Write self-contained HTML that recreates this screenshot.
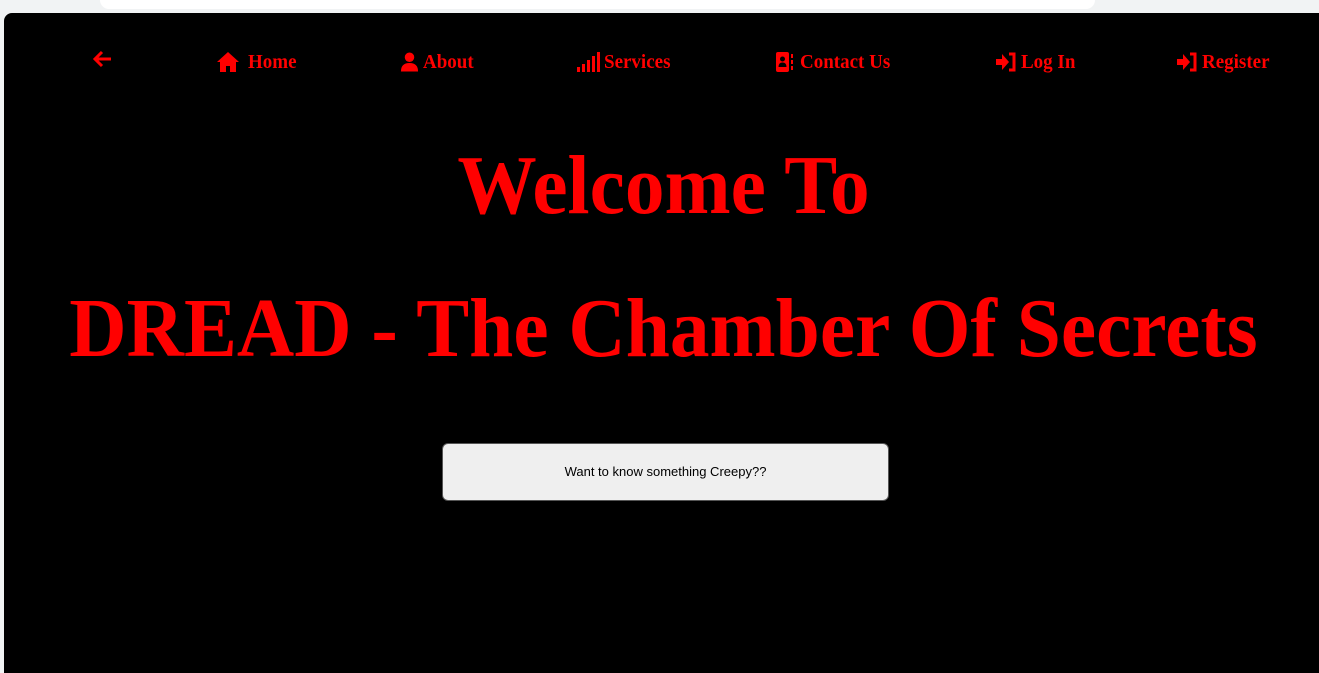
<!DOCTYPE html>
<html><head><meta charset="utf-8"><style>
html,body{margin:0;padding:0;width:1319px;height:660px;overflow:hidden;background:#f1f3f4;font-family:"Liberation Serif",serif}
.top{position:absolute;left:100px;top:0;width:995px;height:9px;background:#fff;border-radius:0 0 10px 10px}
.main{position:absolute;left:4px;top:13px;width:1330px;height:660px;background:#000;border-radius:8px 0 0 0}
.nav{position:absolute;top:50px;color:#f00;font-weight:bold;font-size:20px;display:flex;align-items:center;white-space:nowrap;line-height:24px}
.nav span{display:inline-block;transform:scaleX(0.95);transform-origin:left}
.nav svg{fill:#f00;margin-right:4px}
h1{position:absolute;left:0;width:1327px;margin:0;text-align:center;color:#f00;font-weight:bold;font-size:84px;line-height:100px;white-space:nowrap;transform:scaleX(0.945)}
.btn{position:absolute;left:442px;top:443px;width:445px;height:56px;background:#efefef;border:1px solid #555;border-radius:6px;font-family:"Liberation Sans",sans-serif;font-size:13px;color:#000;text-align:center;line-height:56px;box-sizing:content-box}
</style></head><body>
<div class="top"></div>
<div class="main"></div>
<div class="nav" style="left:93px;top:50px"><svg width="20" height="18" viewBox="0 0 20 18"><path d="M9 2 L2 9 L9 16 M2 9 H18" stroke="#f00" stroke-width="3" fill="none"/></svg></div>
<div class="nav" style="left:216px"><svg width="24" height="22" viewBox="0 0 24 22" style="margin-right:8px"><path d="M12 1 L1 11 H4 V21 H10 V15 H14 V21 H20 V11 H23 Z"/></svg><span>Home</span></div>
<div class="nav" style="left:400px"><svg width="19" height="22" viewBox="0 0 20 22"><circle cx="10" cy="6" r="5"/><path d="M1 21 Q1 12 10 12 Q19 12 19 21 Z"/></svg><span>About</span></div>
<div class="nav" style="left:576px"><svg width="24" height="20" viewBox="0 0 24 20"><rect x="1" y="15" width="3" height="5"/><rect x="6" y="12" width="3" height="8"/><rect x="11" y="8" width="3" height="12"/><rect x="16" y="4" width="3" height="16"/><rect x="21" y="0" width="3" height="20"/></svg><span>Services</span></div>
<div class="nav" style="left:776px"><svg width="20" height="22" viewBox="0 0 20 22"><rect x="0" y="1" width="13" height="20" rx="2"/><circle cx="6.5" cy="8" r="2.5" fill="#000"/><path d="M2.5 16 Q2.5 11.5 6.5 11.5 Q10.5 11.5 10.5 16 Z" fill="#000"/><rect x="15" y="3" width="2" height="4"/><rect x="15" y="9" width="2" height="4"/><rect x="15" y="15" width="2" height="4"/></svg><span>Contact Us</span></div>
<div class="nav" style="left:995px"><svg width="22" height="22" viewBox="0 0 22 22"><path d="M1 8 H7 V3 L14 11 L7 19 V14 H1 Z"/><path d="M14 3 H19 V19 H14" stroke="#f00" stroke-width="3" fill="none"/></svg><span>Log In</span></div>
<div class="nav" style="left:1176px"><svg width="22" height="22" viewBox="0 0 22 22"><path d="M1 8 H7 V3 L14 11 L7 19 V14 H1 Z"/><path d="M14 3 H19 V19 H14" stroke="#f00" stroke-width="3" fill="none"/></svg><span>Register</span></div>
<h1 style="top:136px">Welcome To</h1>
<h1 style="top:279px">DREAD - The Chamber Of Secrets</h1>
<div class="btn">Want to know something Creepy??</div>
</body></html>
